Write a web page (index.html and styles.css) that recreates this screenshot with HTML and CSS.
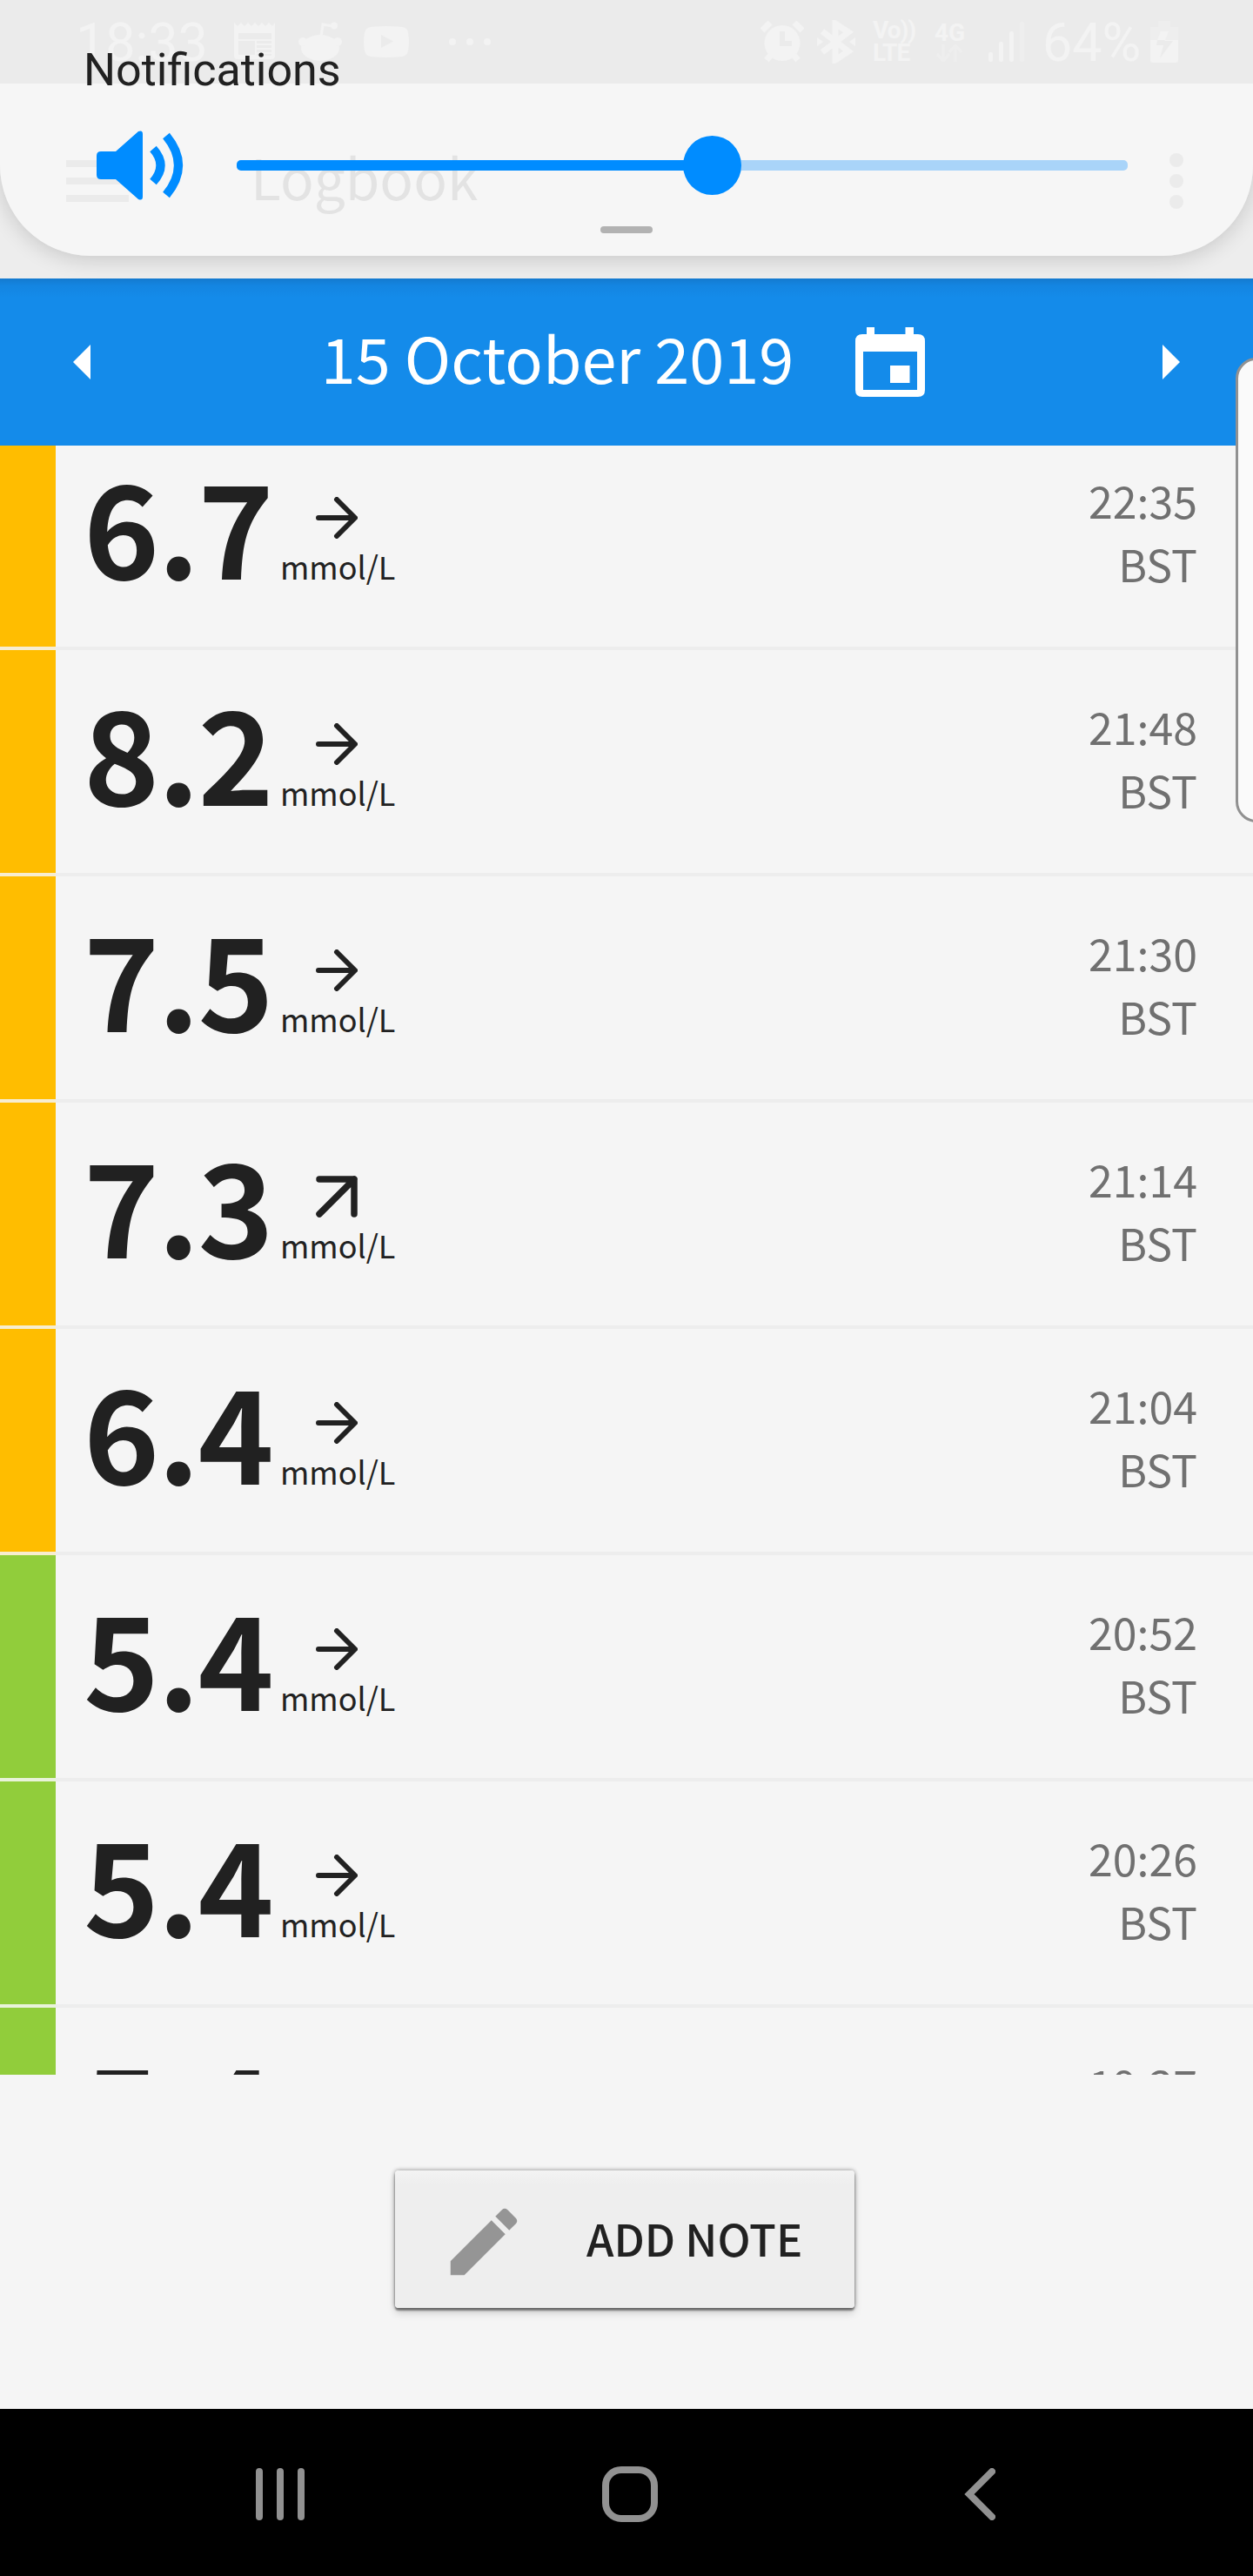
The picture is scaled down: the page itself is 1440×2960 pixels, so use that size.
FILE: index.html
```html
<!DOCTYPE html>
<html lang="en">
<head>
  <meta charset="UTF-8" />
  <meta name="viewport" content="width=device-width, initial-scale=1.0"/>
  <title>Logbook</title>
  <link rel="stylesheet" href="styles.css">
</head>
<body>
  <div class="phone">
    <div class="status-bar">
      <span class="clock">18:33</span>
      <svg class="news" width="48" height="44" viewBox="0 0 48 44">
        <path fill-rule="evenodd" d="M0 0l4 4 4-4 4 4 4-4 4 4 4-4 4 4 4-4 4 4 4-4 4 4 3-4v38q0 4-4 4H4q-4 0-4-4zM5 12v7h38v-7zM5 21v16h19V21zM26 21v3h17v-3zM26 26v3h17v-3zM26 31v3h17v-3zM26 36v2h17v-2z"/>
      </svg>
      <svg class="reddit" width="50" height="46" viewBox="0 0 50 46">
        <ellipse cx="25" cy="30" rx="22" ry="15"/>
        <circle cx="5" cy="23" r="5"/>
        <circle cx="45" cy="23" r="5"/>
        <circle cx="41" cy="4.500" r="4"/>
        <path class="line" d="M26 17l2-14 11 2"/>
      </svg>
      <svg class="video" width="52" height="36" viewBox="0 0 52 36">
        <path fill-rule="evenodd" d="M8 1Q26-1 44 1q7 1 7 7 2 10 0 20-1 6-7 7-18 2-36 0-6-1-7-7-2-10 0-20 1-6 7-7zM20 10v15l14-7.500z"/>
      </svg>
      <svg class="more" width="50" height="8" viewBox="0 0 50 8">
        <circle cx="5" cy="4" r="4"/><circle cx="25" cy="4" r="4"/><circle cx="45" cy="4" r="4"/>
      </svg>

      <svg class="alarm" width="50" height="48" viewBox="0 0 50 48">
        <path fill-rule="evenodd" d="M25 5a20 20 0 1 1 0 41a20 20 0 1 1 0-41zM22 12v17h14v-6h-8V12z"/>
        <path class="thick" d="M2 11l9-9M48 11l-9-9M7 45l5-6M43 45l-5-6"/>
      </svg>
      <svg class="bluetooth" width="44" height="50" viewBox="0 0 44 50">
        <path class="thick" d="M6 13l30 23-15 10V4l15 10L6 37"/>
        <path d="M0 20l7 5-7 5zM44 20l-7 5 7 5z"/>
      </svg>
      <span class="volte">Vo))<br>LTE</span>
      <span class="net">4G
        <svg width="34" height="20" viewBox="0 0 34 20"><path class="line dim" d="M10 0v18M3 11l7 8 7-8M24 20V2M17 9l7-8 7 8"/></svg>
      </span>
      <svg class="signal" width="42" height="46" viewBox="0 0 42 46">
        <rect y="35" width="5" height="11" rx="2"/>
        <rect x="12" y="23" width="5" height="23" rx="2"/>
        <rect x="24" y="11" width="5" height="35" rx="2"/>
        <rect class="dim" x="36" y="0" width="5" height="46" rx="2"/>
      </svg>
      <span class="percent">64%</span>
      <svg class="battery" width="32" height="48" viewBox="0 0 32 48">
        <path class="dim" d="M9 0h14v7h9v15H0V7h9z"/>
        <path d="M0 22h32v23q0 3-3 3H3q-3 0-3-3z"/>
        <path d="M12 12h9l-4 10H8z"/>
        <path class="bolt" d="M8 22h8l1 1h9L11 43l4-15H7z"/>
      </svg>
    </div>

    <div class="app-bar">
      <div class="burger"><i></i><i></i><i></i></div>
      <h1>Logbook</h1>
      <div class="dots"><i></i><i></i><i></i></div>
    </div>

    <div class="date-bar">
      <svg width="20" height="40" viewBox="0 0 20 40"><path d="M20 0v40L0 20z"/></svg>
      <div class="date">
        <span>15 October 2019</span>
        <svg width="80" height="80" viewBox="0 0 80 80">
          <path fill-rule="evenodd" d="M13 0h9v8h35.500V0H67v8h5q8 0 8 8v56q0 8-8 8H8q-8 0-8-8V16q0-8 8-8h5zM9 28v44h62V28zM40 44h22.500v20H40z"/>
        </svg>
      </div>
      <svg width="20" height="40" viewBox="0 0 20 40"><path d="M0 0v40l20-20z"/></svg>
    </div>

    <div class="log" id="log"></div>

    <div class="footer">
      <button class="add-note">
        <svg width="102" height="102" viewBox="0 0 24 24"><path d="M3 17.250V21h3.750L17.810 9.940l-3.750-3.750L3 17.250zM20.710 7.040c.39-.39.39-1.020 0-1.410l-2.340-2.340c-.39-.39-1.020-.39-1.410 0l-1.830 1.830 3.750 3.750 1.830-1.830z"/></svg>
        <span>ADD NOTE</span>
      </button>
    </div>

    <div class="nav-bar">
      <svg width="58" height="60" viewBox="0 0 58 60"><path d="M5 4v52M29 4v52M53 4v52"/></svg>
      <svg class="home" width="64" height="64" viewBox="0 0 64 64"><rect x="4" y="4" width="56" height="56" rx="18"/></svg>
      <svg width="36" height="60" viewBox="0 0 36 60"><path d="M32 4L6 30l26 26"/></svg>
    </div>

    <!-- volume panel -->
    <div class="panel">
      <div class="panel-title">Notifications</div>
      <div class="volume">
        <svg width="100" height="80" viewBox="0 0 100 80">
          <path d="M5 24h17L48 1q5-2 5 3v72q0 5-5 3L22 56H5q-5 0-5-5V29q0-5 5-5z"/>
          <path class="wave" d="M65 21q17 19 0 38M80 6q28 34 0 68"/>
        </svg>
        <div class="slider"><div class="fill"></div><div class="thumb"></div></div>
      </div>
      <div class="grip"></div>
    </div>

    <div class="edge-handle"></div>
  </div>

  <script>
    const readings = [
      ['6.7', 'flat', '22:35', 'high'],
      ['8.2', 'flat', '21:48', 'high'],
      ['7.5', 'flat', '21:30', 'high'],
      ['7.3', 'up', '21:14', 'high'],
      ['6.4', 'flat', '21:04', 'high'],
      ['5.4', 'flat', '20:52', 'ok'],
      ['5.4', 'flat', '20:26', 'ok'],
      ['5.4', 'flat', '19:37', 'ok']
    ];
    const arrows = {
      flat: 'M3 24h41M24 3l21 21-21 21',
      up: 'M4 44L44 4M4 4h40v40'
    };

    document.getElementById('log').innerHTML = readings.map(([value, trend, time, level]) => `
      <div class="row ${level}">
        <div class="value">${value}</div>
        <div class="trend">
          <svg class="${trend}" width="48" height="48" viewBox="0 0 48 48"><path d="${arrows[trend]}"/></svg>
          <span>mmol/L</span>
        </div>
        <div class="time">${time}<br>BST</div>
      </div>`).join('');
  </script>
</body>
</html>
```
FILE: styles.css
```css
body {
  margin: 0;
  background: #f5f5f5;
  font-family: 'Noto Sans CJK JP', 'Noto Sans', sans-serif;
  color: #212121;
}

svg {
  display: block;
  flex-shrink: 0;
}

.phone {
  position: relative;
  width: 1440px;
  height: 2960px;
  overflow: hidden;
  display: flex;
  flex-direction: column;
}

/* Status bar */
.status-bar {
  height: 96px;
  box-sizing: border-box;
  padding-left: 87px;
  background: #898989;
  color: #cfcfcf;
  font-family: Roboto, sans-serif;
  display: flex;
  align-items: center;
  flex-shrink: 0;
}

.status-bar svg {
  fill: #cfcfcf;
}

.status-bar .line,
.status-bar .thick {
  fill: none;
  stroke: #cfcfcf;
  stroke-width: 3;
}

.status-bar .thick {
  stroke-width: 7;
}

.status-bar .dim {
  opacity: 0.4;
}

.status-bar .bolt {
  fill: #898989;
}

.clock,
.percent {
  font-size: 61px;
  line-height: 92px;
  padding-top: 2px;
}

.clock {
  width: 182px;
}

.reddit {
  margin-left: 26px;
}

.video {
  margin-left: 25px;
}

.more {
  margin-left: 45px;
}

.alarm {
  margin-left: 309px;
}

.bluetooth {
  margin-left: 15px;
}

.volte,
.net {
  font-size: 28px;
  font-weight: 700;
  line-height: 26px;
}

.volte {
  width: 50px;
  margin-left: 20px;
  letter-spacing: -1px;
}

.net {
  width: 36px;
  margin-left: 21px;
}

.signal {
  margin-left: 26px;
}

.percent {
  margin-left: 20px;
  width: 112px;
}

.battery {
  margin-left: 12px;
}

/* App bar */
.app-bar {
  height: 224px;
  box-sizing: border-box;
  padding: 0 80px 0 76px;
  background: #ededed;
  display: flex;
  align-items: center;
  flex-shrink: 0;
}

.app-bar h1 {
  margin: 0 auto 0 140px;
  padding-bottom: 12px;
  color: #393939;
  font-size: 64px;
  font-weight: 400;
  line-height: 212px;
}

.burger,
.dots {
  display: flex;
  flex-direction: column;
  gap: 12px;
}

.burger i {
  width: 72px;
  height: 8px;
  background: #898989;
}

.dots {
  gap: 8px;
}

.dots i {
  width: 16px;
  height: 16px;
  border-radius: 50%;
  background: #898989;
}

/* Date bar */
.date-bar {
  height: 192px;
  box-sizing: border-box;
  padding: 0 84px;
  background: linear-gradient(#147acf, #1485e1 8px, #148bea 22px);
  color: #fff;
  display: flex;
  align-items: center;
  justify-content: space-between;
  flex-shrink: 0;
}

.date-bar svg {
  fill: #fff;
}

.date {
  display: flex;
  align-items: center;
  gap: 71px;
  margin-right: 8px;
  font-size: 72px;
  line-height: 180px;
}

.date span {
  padding-bottom: 12px;
}

/* Readings */
.log {
  height: 1872px;
  overflow: hidden;
  flex-shrink: 0;
}

.row {
  height: 260px;
  box-sizing: border-box;
  padding: 0 64px 0 32px;
  border-left: 64px solid #ffbd00;
  display: flex;
  align-items: flex-start;
  background: linear-gradient(#ededed, #ededed) bottom / 100% 4px no-repeat;
  position: relative;
}

.row:first-child {
  margin-top: -25px;
}

.row.ok {
  border-left-color: #91cd3b;
}

/* pale gap between the level bars */
.row::after {
  content: '';
  position: absolute;
  left: -64px;
  bottom: 0;
  width: 64px;
  height: 4px;
  background: #f7edd0;
}

.row.ok::after {
  background: #e9f3da;
}

.value {
  width: 226px;
  font-size: 148px;
  font-weight: 700;
  letter-spacing: -2px;
  line-height: 229px;
}

.trend {
  display: flex;
  flex-direction: column;
  padding-top: 84px;
}

.trend svg {
  margin-left: 41px;
  fill: none;
  stroke: #212121;
  stroke-width: 6;
  stroke-linecap: round;
  stroke-linejoin: round;
}

.trend svg.up {
  stroke-width: 7.5;
}

.trend span {
  font-size: 36px;
  line-height: 50px;
  margin-top: 6px;
}

.time {
  margin-left: auto;
  padding-top: 51px;
  color: #707070;
  font-size: 50px;
  line-height: 73px;
  text-align: right;
}

/* Footer */
.footer {
  height: 384px;
  box-sizing: border-box;
  padding: 110px 4px 0 0;
  display: flex;
  justify-content: center;
  align-items: flex-start;
  flex-shrink: 0;
}

.add-note {
  width: 528px;
  height: 158px;
  padding: 0 0 0 51px;
  border: none;
  border-radius: 4px;
  background: linear-gradient(#f3f3f3, #eee 16px);
  box-shadow: 0 0 5px rgba(0,0,0,0.45), 0 3px 2px rgba(0,0,0,0.4), 0 6px 10px rgba(0,0,0,0.15);
  color: #212121;
  font-family: inherit;
  font-size: 50.5px;
  font-weight: 500;
  display: flex;
  align-items: center;
  gap: 67px;
}

.add-note svg {
  fill: #959595;
  margin-top: 5px;
}

.add-note span {
  padding-bottom: 4px;
}

/* Navigation bar */
.nav-bar {
  height: 192px;
  box-sizing: border-box;
  padding: 4px 296px 0 293px;
  background: #000;
  display: flex;
  align-items: center;
  justify-content: space-between;
  flex-shrink: 0;
}

.nav-bar svg {
  fill: none;
  stroke: #919191;
  stroke-width: 8;
  stroke-linecap: round;
}

.nav-bar .home {
  margin-right: 11px;
}

/* Volume panel */
.panel {
  position: absolute;
  top: 0;
  left: 0;
  width: 1440px;
  height: 294px;
  box-sizing: border-box;
  border-radius: 0 0 104px 104px;
  background: rgba(246,246,246,0.9);
  box-shadow: 0 4px 24px rgba(0,0,0,0.16);
}

.panel-title {
  padding: 50px 0 0 96px;
  font-family: Roboto, sans-serif;
  font-size: 52px;
  line-height: 62px;
}

.volume {
  display: flex;
  align-items: center;
  gap: 61px;
  padding: 38px 0 0 111px;
}

.volume svg {
  fill: #008cff;
}

.volume .wave {
  fill: none;
  stroke: #008cff;
  stroke-width: 10;
}

.slider {
  width: 1024px;
  height: 12px;
  border-radius: 5px;
  background: #a9d4f9;
  display: flex;
  align-items: center;
}

.slider .fill {
  width: 546px;
  height: 12px;
  border-radius: 5px;
  background: #008cff;
}

.slider .thumb {
  width: 67px;
  height: 68px;
  margin-left: -33px;
  border-radius: 50%;
  background: #008cff;
  flex-shrink: 0;
}

.grip {
  width: 60px;
  height: 8px;
  margin: 30px auto 0;
  border-radius: 4px;
  background: #b2b2b2;
}

/* Edge panel handle */
.edge-handle {
  position: absolute;
  top: 411px;
  right: -30px;
  width: 50px;
  height: 534px;
  box-sizing: border-box;
  border: 3px solid #919191;
  border-radius: 24px;
  background: #fafafa;
}
```
